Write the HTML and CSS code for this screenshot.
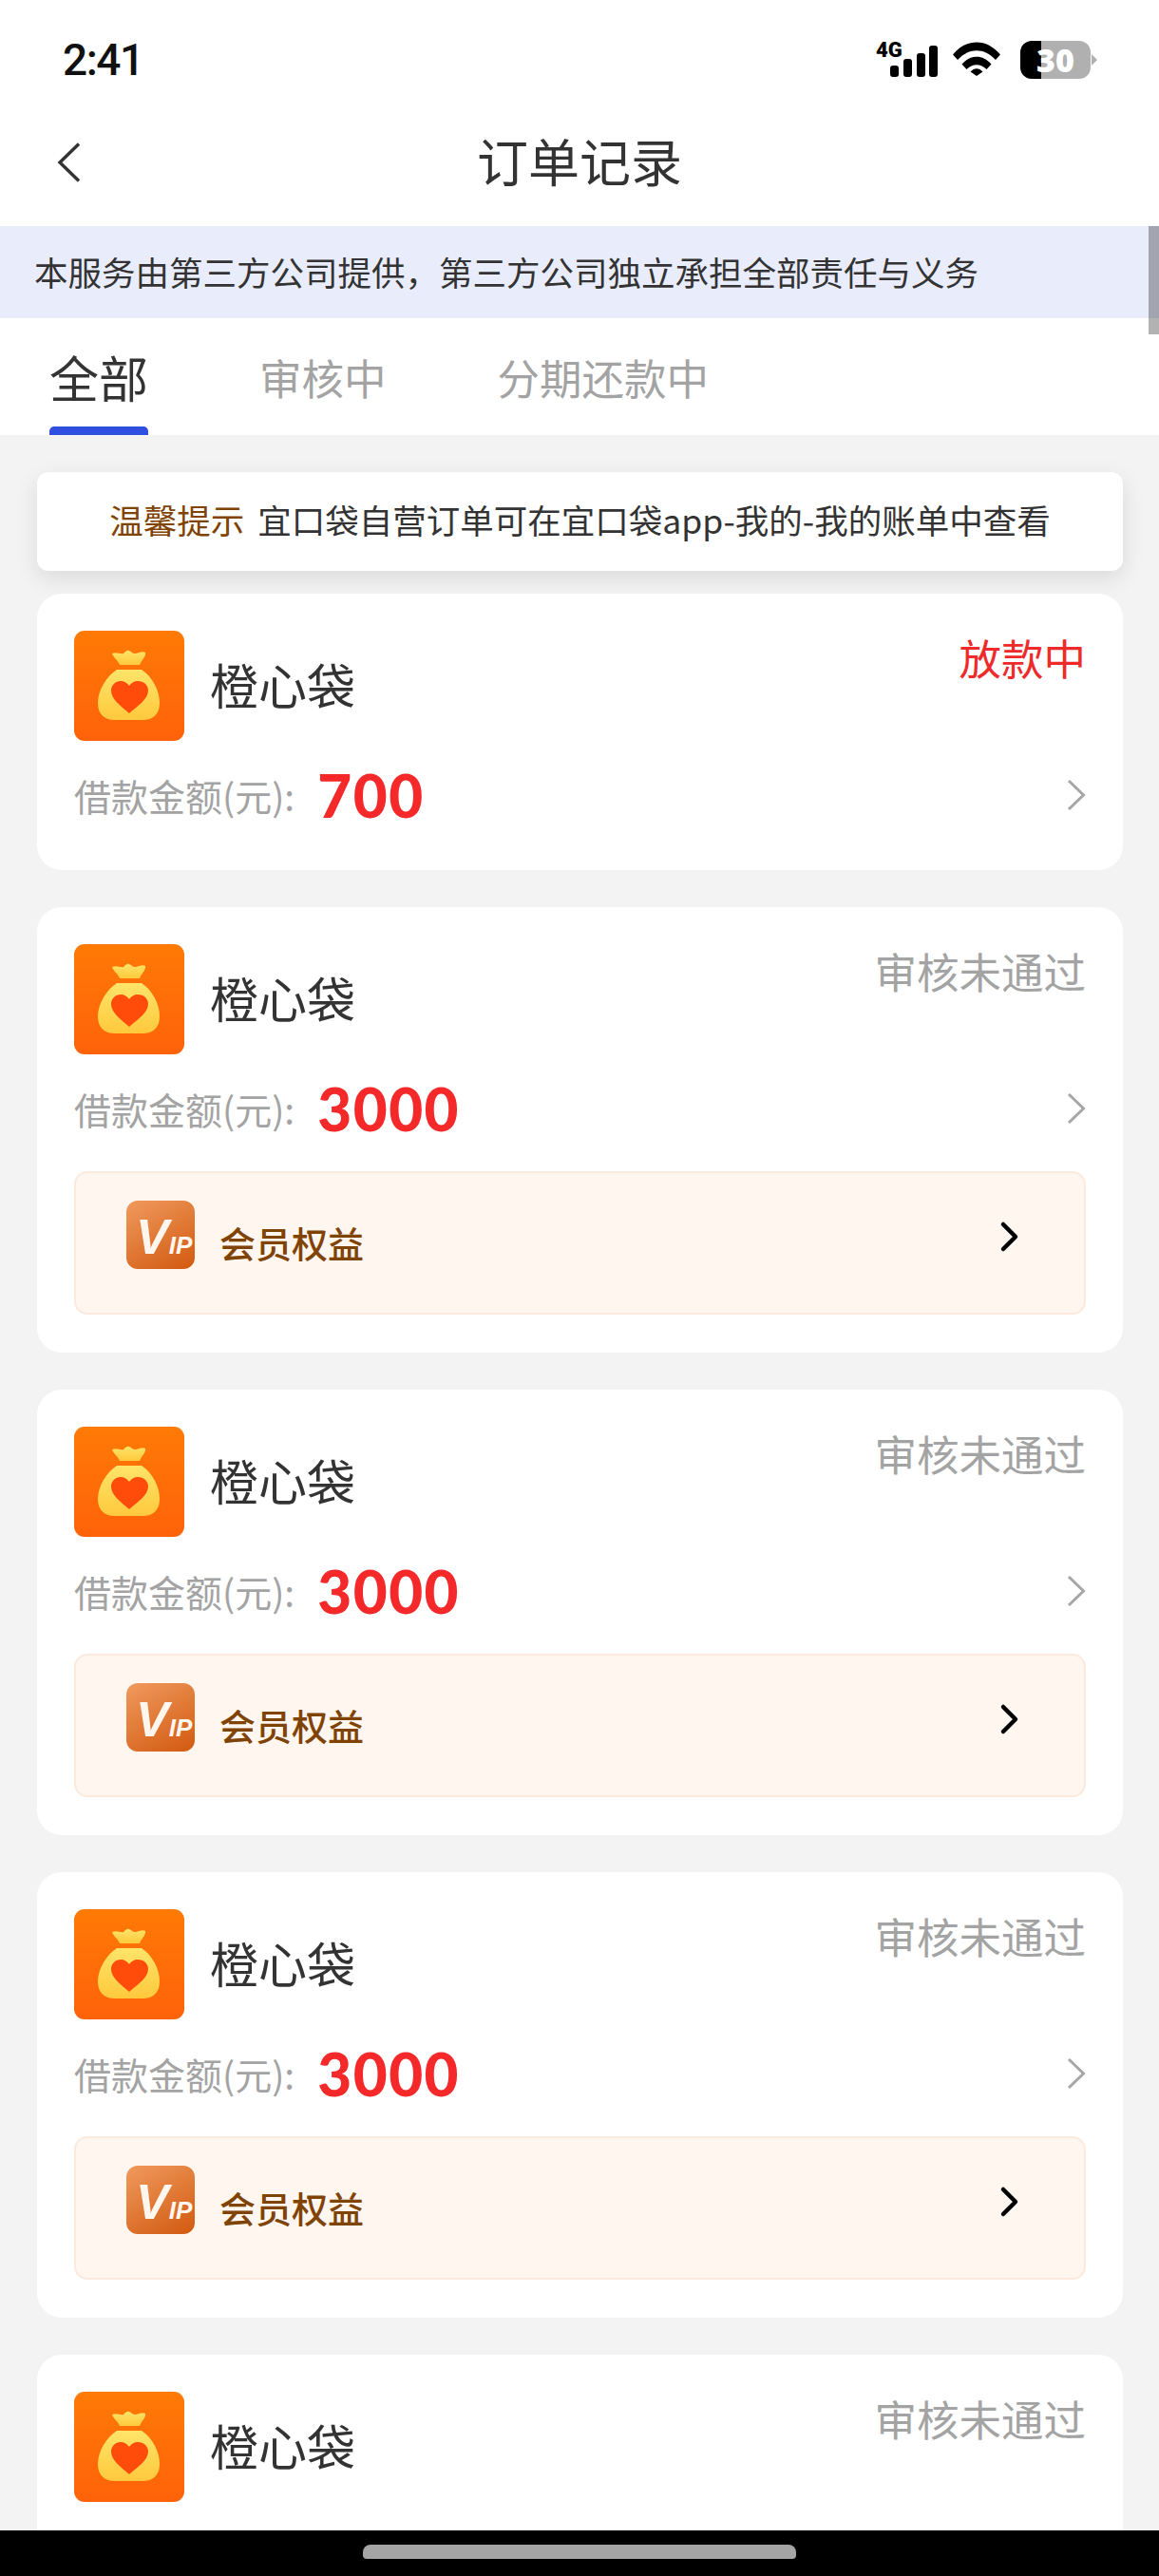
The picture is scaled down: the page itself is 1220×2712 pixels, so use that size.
FILE: index.html
```html
<!DOCTYPE html>
<html lang="zh-CN">
<head>
    <meta charset="UTF-8">
    <meta name="viewport" content="width=device-width, initial-scale=1.0">
    <title>订单记录</title>
    <link rel="stylesheet" href="styles.css">
</head>
<body>
    <svg class="defs" width="0" height="0">
        <defs>
            <linearGradient id="bagFill" x1="0" y1="0" x2="0" y2="1">
                <stop offset="0" stop-color="#ffe46a"/>
                <stop offset="1" stop-color="#ffc93c"/>
            </linearGradient>
            <linearGradient id="logoBg" x1="0" y1="0" x2="0" y2="1">
                <stop offset="0" stop-color="#ff7a06"/>
                <stop offset="1" stop-color="#ff620a"/>
            </linearGradient>
            <symbol id="bag" viewBox="0 0 116 116">
                <rect width="116" height="116" rx="11" fill="url(#logoBg)"/>
                <path d="M40 24c5-2 9 1 12 0 2-2 4-4 6-3 3 1 3 3 6 3 4 0 8-3 11-1 1 4-4 8-6 13H48c-2-5-7-8-8-12z" fill="url(#bagFill)"/>
                <path d="M45 41h26c11 7 19 22 19 35 0 12-7 18-18 18H43c-11 0-18-6-18-18 0-13 9-28 20-35z" fill="url(#bagFill)"/>
                <path d="M58 87C49 79 39 72 39 63c0-6 5-10 10-10 4 0 7 2 9 5 2-3 5-5 9-5 6 0 11 4 11 10 0 9-11 16-20 24z" fill="#ff4c0a"/>
            </symbol>
            <symbol id="chevron" viewBox="0 0 20 34">
                <path d="M2 2 17.500 17 2 32" fill="none" stroke="#a6a6a6" stroke-width="3"/>
            </symbol>
        </defs>
    </svg>

    <div class="app">
        <div class="status-bar">
            <span class="status-time">2:41</span>
            <div class="status-icons">
                <div class="signal">
                    <span class="signal-label">4G</span>
                    <svg width="50" height="33" viewBox="0 0 50 33">
                        <rect x="0" y="21" width="9" height="12" rx="3"/>
                        <rect x="14" y="14" width="9" height="19" rx="3"/>
                        <rect x="28" y="8" width="9" height="25" rx="3"/>
                        <rect x="41" y="0" width="9" height="33" rx="3"/>
                    </svg>
                </div>
                <svg width="50" height="37" viewBox="0 0 50 37">
                    <path d="M0 13.500C14-4 36-4 50 13.500l-5 5.500C33 6 17 6 5 19z"/>
                    <path d="M9.500 23.500c9-10.500 22-10.500 31 0l-5 5.500c-6-6.500-15-6.500-21 0z"/>
                    <path d="M18.500 32.500c4-4.500 9-4.500 13 0L25 37z" transform="translate(0 -1)"/>
                </svg>
                <div class="battery">
                    <span class="battery-num">30</span>
                </div>
            </div>
        </div>

        <div class="nav-bar">
            <svg class="nav-back" width="26" height="42" viewBox="0 0 26 42">
                <path d="M23 1.500 3 21l20 19.500" fill="none" stroke="#333" stroke-width="3.400"/>
            </svg>
            <h1>订单记录</h1>
        </div>

        <div class="notice">本服务由第三方公司提供，第三方公司独立承担全部责任与义务</div>

        <div class="tabs">
            <div class="tab tab-active">全部</div>
            <div class="tab">审核中</div>
            <div class="tab">分期还款中</div>
        </div>

        <div class="scroll-thumb"></div>

        <div class="list">
            <div class="tip"><span class="tip-label">温馨提示</span>宜口袋自营订单可在宜口袋app-我的-我的账单中查看</div>

            <div class="card">
                <div class="card-head">
                    <svg class="card-logo"><use href="#bag"/></svg>
                    <span class="card-name">橙心袋</span>
                    <span class="card-status status-red">放款中</span>
                </div>
                <div class="card-amount">
                    <span class="amount-label">借款金额(元):</span>
                    <span class="amount-num">700</span>
                    <svg class="amount-arrow"><use href="#chevron"/></svg>
                </div>
            </div>

            <div class="card card-vip">
                <div class="card-head">
                    <svg class="card-logo"><use href="#bag"/></svg>
                    <span class="card-name">橙心袋</span>
                    <span class="card-status">审核未通过</span>
                </div>
                <div class="card-amount">
                    <span class="amount-label">借款金额(元):</span>
                    <span class="amount-num">3000</span>
                    <svg class="amount-arrow"><use href="#chevron"/></svg>
                </div>
                <div class="vip-row">
                    <div class="vip-logo"><span class="vip-v">V</span><span class="vip-ip">IP</span></div>
                    <span class="vip-text">会员权益</span>
                    <svg class="vip-arrow" width="22" height="34" viewBox="0 0 22 34">
                        <path d="M4 4 17 17 4 30" fill="none" stroke="#000" stroke-width="4.500" stroke-linecap="round" stroke-linejoin="round"/>
                    </svg>
                </div>
            </div>

            <div class="card card-vip">
                <div class="card-head">
                    <svg class="card-logo"><use href="#bag"/></svg>
                    <span class="card-name">橙心袋</span>
                    <span class="card-status">审核未通过</span>
                </div>
                <div class="card-amount">
                    <span class="amount-label">借款金额(元):</span>
                    <span class="amount-num">3000</span>
                    <svg class="amount-arrow"><use href="#chevron"/></svg>
                </div>
                <div class="vip-row">
                    <div class="vip-logo"><span class="vip-v">V</span><span class="vip-ip">IP</span></div>
                    <span class="vip-text">会员权益</span>
                    <svg class="vip-arrow" width="22" height="34" viewBox="0 0 22 34">
                        <path d="M4 4 17 17 4 30" fill="none" stroke="#000" stroke-width="4.500" stroke-linecap="round" stroke-linejoin="round"/>
                    </svg>
                </div>
            </div>

            <div class="card card-vip">
                <div class="card-head">
                    <svg class="card-logo"><use href="#bag"/></svg>
                    <span class="card-name">橙心袋</span>
                    <span class="card-status">审核未通过</span>
                </div>
                <div class="card-amount">
                    <span class="amount-label">借款金额(元):</span>
                    <span class="amount-num">3000</span>
                    <svg class="amount-arrow"><use href="#chevron"/></svg>
                </div>
                <div class="vip-row">
                    <div class="vip-logo"><span class="vip-v">V</span><span class="vip-ip">IP</span></div>
                    <span class="vip-text">会员权益</span>
                    <svg class="vip-arrow" width="22" height="34" viewBox="0 0 22 34">
                        <path d="M4 4 17 17 4 30" fill="none" stroke="#000" stroke-width="4.500" stroke-linecap="round" stroke-linejoin="round"/>
                    </svg>
                </div>
            </div>

            <div class="card card-vip">
                <div class="card-head">
                    <svg class="card-logo"><use href="#bag"/></svg>
                    <span class="card-name">橙心袋</span>
                    <span class="card-status">审核未通过</span>
                </div>
            </div>
        </div>

        <div class="home-bar"><div class="home-pill"></div></div>
    </div>
</body>
</html>
```

FILE: styles.css
```css
/* Global Styles */
body {
    margin: 0;
    padding: 0;
    font-family: "Noto Sans CJK SC", "Noto Sans", sans-serif;
    color: #333;
    background-color: #f3f3f3;
}

h1 {
    margin: 0;
    font-size: 54px;
    font-weight: 400;
    color: #333;
}

.defs {
    display: block;
    height: 0;
}

.app {
    position: relative;
    display: flex;
    flex-direction: column;
    width: 1220px;
    height: 2712px;
    overflow: hidden;
}

/* Status bar */
.status-bar {
    display: flex;
    flex: none;
    align-items: center;
    justify-content: space-between;
    height: 107px;
    box-sizing: border-box;
    padding: 18px 72px 0 66px;
    background-color: #fff;
}

.status-time {
    font-family: Roboto, sans-serif;
    font-size: 46px;
    font-weight: 500;
    letter-spacing: -1.500px;
    color: #111;
    line-height: 1;
}

.status-icons {
    display: flex;
    align-items: center;
    gap: 16px;
}

.signal {
    position: relative;
    width: 65px;
    height: 36px;
    display: flex;
    justify-content: flex-end;
    align-items: flex-end;
}

.signal-label {
    position: absolute;
    left: 0;
    top: -3px;
    font-family: Roboto, sans-serif;
    font-size: 22px;
    font-weight: 900;
    line-height: 1;
    color: #000;
}

.battery {
    position: relative;
    width: 74px;
    height: 40px;
    border-radius: 12px;
    margin-left: 5px;
    background: linear-gradient(90deg, #000 0, #000 30%, #b0b0b0 30%, #b0b0b0 100%);
    display: flex;
    align-items: center;
    justify-content: center;
}

.battery::after {
    content: "";
    position: absolute;
    right: -7px;
    top: 14px;
    border-left: 6px solid #b0b0b0;
    border-top: 6px solid transparent;
    border-bottom: 6px solid transparent;
}

.battery-num {
    font-family: "Open Sans", sans-serif;
    font-size: 34px;
    font-weight: 800;
    line-height: 1;
    color: #fff;
}

/* Nav bar */
.nav-bar {
    display: flex;
    flex: none;
    align-items: center;
    justify-content: center;
    position: relative;
    height: 131px;
    box-sizing: border-box;
    padding-bottom: 9px;
    background-color: #fff;
}

.nav-back {
    position: absolute;
    left: 60px;
    top: 43px;
}

.notice {
    display: flex;
    flex: none;
    align-items: center;
    height: 97px;
    box-sizing: border-box;
    padding: 0 0 3px 36px;
    font-size: 35.500px;
    color: #333;
    background-color: #e9edfb;
}

/* Tabs */
.tabs {
    display: flex;
    flex: none;
    gap: 117px;
    height: 123px;
    padding-left: 52px;
    background-color: #fff;
}

.tab {
    position: relative;
    display: flex;
    align-items: center;
    height: 123px;
    font-size: 44.500px;
    color: #a3a3a3;
}

.tab-active {
    font-size: 52px;
    color: #333;
}

.tab-active::after {
    content: "";
    position: absolute;
    left: 0;
    right: 0;
    bottom: 0;
    height: 9px;
    border-radius: 5px 5px 0 0;
    background-color: #2f4fe0;
}

.scroll-thumb {
    position: absolute;
    right: 0;
    top: 238px;
    width: 11px;
    height: 114px;
    background-color: rgba(0, 0, 0, 0.3);
}

/* List */
.list {
    display: flex;
    flex: 1;
    flex-direction: column;
    min-height: 0;
    overflow: hidden;
    padding: 39px 38px 0 39px;
}

.tip {
    display: flex;
    flex: none;
    align-items: center;
    justify-content: center;
    height: 104px;
    box-sizing: border-box;
    margin-bottom: 24px;
    padding-bottom: 5px;
    font-size: 35.500px;
    color: #333;
    background-color: #fff;
    border-radius: 12px;
    box-shadow: 0 8px 24px rgba(0, 0, 0, 0.1);
}

.tip-label {
    color: #7f4304;
    margin-right: 14px;
}

.card {
    flex: none;
    position: relative;
    height: 291px;
    box-sizing: border-box;
    margin-bottom: 39px;
    padding: 39px 39px 0;
    background-color: #fff;
    border-radius: 26px;
}

.card-vip {
    height: 469px;
}

.card-head {
    display: flex;
    height: 116px;
}

.card-logo {
    flex: none;
    width: 116px;
    height: 116px;
}

.card-name {
    margin-left: 27px;
    font-size: 51px;
    line-height: 112px;
    color: #333;
}

.card-status {
    margin-left: auto;
    font-size: 44.500px;
    line-height: 55px;
    color: #a3a3a3;
}

.status-red {
    color: #ee2a2a;
}

.card-amount {
    display: flex;
    align-items: center;
    height: 64px;
    margin-top: 25px;
}

.amount-label {
    font-size: 39px;
    color: #a3a3a3;
}

.amount-num {
    margin-left: 24px;
    font-family: Lato, sans-serif;
    font-size: 62px;
    font-weight: 900;
    letter-spacing: 1.500px;
    line-height: 1;
    color: #f5282a;
}

.amount-arrow {
    flex: none;
    width: 20px;
    height: 34px;
    margin-left: auto;
}

/* Member row */
.vip-row {
    display: flex;
    align-items: center;
    height: 151px;
    box-sizing: border-box;
    margin-top: 34px;
    padding: 0 0 0 53px;
    background-color: #fff6f0;
    border: 2px solid #fbeadd;
    border-radius: 14px;
}

.vip-logo {
    display: flex;
    flex: none;
    align-items: baseline;
    width: 72px;
    height: 72px;
    box-sizing: border-box;
    margin-bottom: 18px;
    padding: 12px 0 0 10px;
    border-radius: 12px;
    overflow: hidden;
    font-family: "Liberation Sans", sans-serif;
    font-style: italic;
    font-weight: 700;
    line-height: 1;
    color: #fff6ee;
    background: linear-gradient(150deg, #f09a5e 0%, #d2590f 100%);
}

.vip-v {
    font-size: 52px;
}

.vip-ip {
    font-size: 26px;
}

.vip-text {
    margin-left: 26px;
    margin-bottom: 3px;
    font-size: 38px;
    font-weight: 500;
    color: #7f4304;
}

.vip-arrow {
    margin-left: auto;
    margin-bottom: 14px;
    margin-right: 67px;
}

/* Home bar */
.home-bar {
    display: flex;
    flex: none;
    justify-content: center;
    height: 48px;
    padding-top: 15px;
    box-sizing: border-box;
    background-color: #000;
}

.home-pill {
    width: 456px;
    height: 15px;
    border-radius: 8px 8px 4px 4px;
    background-color: #a5a5a5;
}
```
